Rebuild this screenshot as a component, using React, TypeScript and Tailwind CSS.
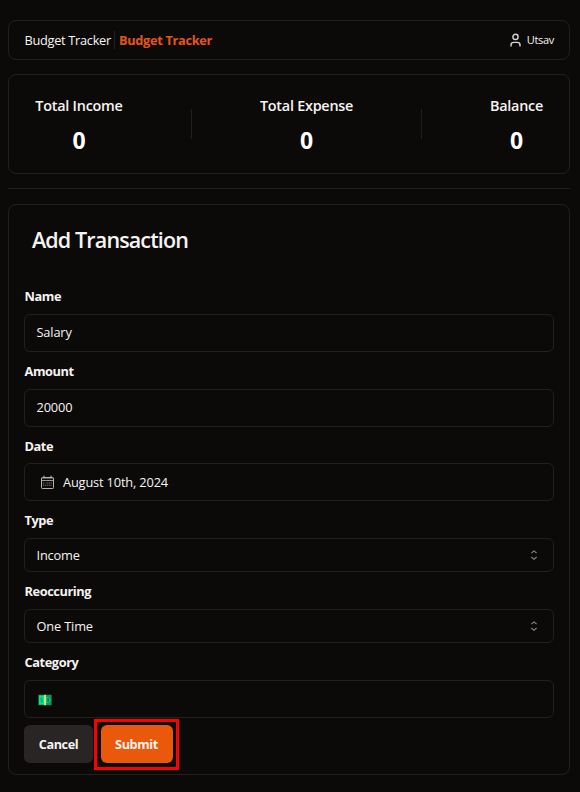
import type { ReactNode } from "react";

const border = "border border-[#21201e]";

function Label({ children, className = "" }: { children: ReactNode; className?: string }) {
  return <div className={`flex h-5 items-center pt-px pl-[0.5px] text-[12.8px] font-bold tracking-[-0.42px] ${className}`}>{children}</div>;
}

function Box({ children, className }: { children: ReactNode; className: string }) {
  return <div className={`${border} flex items-center rounded-md text-[12.8px] tracking-[-0.16px] ${className}`}>{children}</div>;
}

function Sort() {
  return (
    <svg className="mr-3 text-[#8b8a88]" width="14" height="14" viewBox="0 0 14 14" fill="none" stroke="currentColor">
      <path d="M4.4 5.2 7 2.9l2.6 2.3M4.4 9l2.6 2.3L9.6 9" strokeWidth="1.1" />
    </svg>
  );
}

function Person() {
  return (
    <svg width="14" height="15" viewBox="0 0 14 15" fill="none" stroke="#d8d6d3" strokeWidth="1.4" strokeLinecap="round">
      <circle cx="6.5" cy="3.9" r="2.6" />
      <path d="M2 13v-1c0-1.6 1.2-2.6 2.8-2.6h3.4c1.6 0 2.8 1 2.8 2.6v1" />
    </svg>
  );
}

function Calendar() {
  return (
    <svg className="mr-2" width="15" height="15" viewBox="0 0 15 15" fill="none" stroke="#b5b3b0">
      <rect x="1.5" y="2.5" width="12" height="11" rx=".8" />
      <path d="M1.5 3.5h12" opacity=".45" />
      <path d="M1.5 5.5h12" opacity=".85" />
      <path d="M4 .8v2M11 .8v2" strokeWidth="1.2" />
      <path d="M6.3 8h6M2.8 8h2.4M2.8 10.2h9" strokeDasharray="1.5 .6" opacity=".6" />
    </svg>
  );
}

function Cash() {
  return (
    <svg className="mt-px" width="14" height="12" viewBox="0 0 14 12">
      <rect x=".4" y=".8" width="13.2" height="10.4" fill="#069b5e" />
      <rect x="1" y="1.5" width="5" height="9" fill="#19d98b" />
      <path d="M4.4 4H2.9v2h1.5v2H2.7" stroke="#0fa568" fill="none" />
      <path d="M8.8 3.6h1.8l1.2 1.2v2.4l-1.2 1.2H8.8z" fill="#087044" stroke="#20d88a" />
      <rect x="6" y=".8" width="2" height="10.4" fill="#b9e986" />
    </svg>
  );
}

function Stat({ title, className }: { title: string; className: string }) {
  return (
    <div className="flex flex-col items-center pt-[2px]">
      <div className={`flex h-6 items-center justify-center text-[14.4px] font-semibold tracking-[-0.24px] whitespace-nowrap ${className}`}>{title}</div>
      <div className="mt-[7px] flex h-8 items-center text-[23px] font-bold text-white">0</div>
    </div>
  );
}

export default function App() {
  return (
    <div className="h-[792px] w-[580px] overflow-hidden bg-[#0c0a09] pt-5 pr-[10px] pl-2 font-['Open_Sans','Noto_Sans',sans-serif] text-[#f5f4f2]">
      <header className={`${border} flex h-10 items-center rounded-lg pr-[15px] pl-[15px] text-[12.8px]`}>
        <span className="w-[90px] pt-px pl-[0.5px] tracking-[-0.3px] whitespace-nowrap">Budget Tracker</span>
        <span className="h-[18px] w-px bg-[#21201e]" />
        <span className="ml-1 pt-px font-bold tracking-[-0.33px] text-[#e4561a]">Budget Tracker</span>
        <div className="ml-auto flex items-center gap-1 text-[11px] tracking-[-0.3px]">
          <Person />
          <span className="pt-px">Utsav</span>
        </div>
      </header>
      <section className={`${border} mt-[14px] flex h-[100px] items-center justify-between rounded-lg px-[26px]`}>
        <Stat title="Total Income" className="w-[88px]" />
        <span className="h-[30px] w-px bg-[#21201e]" />
        <Stat title="Total Expense" className="w-[93px]" />
        <span className="h-[30px] w-px bg-[#21201e]" />
        <Stat title="Balance" className="w-[53px]" />
      </section>
      <div className="mt-[14px] h-px bg-[#21201e]" />
      <main className={`${border} mt-[15px] h-[571px] rounded-lg px-[15px]`}>
        <h1 className="mt-[19px] ml-2 flex h-8 items-center text-[21.5px] font-semibold tracking-[-0.87px]">Add Transaction</h1>
        <div className="mt-[30px]">
          <Label>Name</Label>
          <Box className="mt-2 h-[38px] pl-[11.5px]">Salary</Box>
          <Label className="mt-[9px]">Amount</Label>
          <Box className="mt-2 h-[38px] pl-[11.5px]">20000</Box>
          <Label className="mt-[9px]">Date</Label>
          <Box className="mt-[7px] h-[38px] pl-[15px]"><Calendar /><span className="pt-px">August 10th, 2024</span></Box>
          <Label className="mt-[9px]">Type</Label>
          <Box className="mt-2 h-[34px] justify-between pl-[11.5px]"><span className="pt-px">Income</span><Sort /></Box>
          <Label className="mt-[9px]">Reoccuring</Label>
          <Box className="mt-2 h-[34px] justify-between pl-[11.5px]"><span className="pt-px">One Time</span><Sort /></Box>
          <Label className="mt-[9px]">Category</Label>
          <Box className="mt-[8px] h-[38px] pl-[13px]"><Cash /></Box>
        </div>
        <div className="mt-[7px] flex text-[12.7px] font-bold tracking-[-0.4px]">
          <button className="h-[38px] w-[69px] rounded-md bg-[#292524] pt-px">Cancel</button>
          <div className="-mt-[6px] ml-[1px] flex h-[51px] w-[85px] justify-center border-[3px] border-[#ff0000] pt-[3px]">
            <button className="h-[38px] w-[72px] rounded-md bg-[#ea580c] pt-px">Submit</button>
          </div>
        </div>
      </main>
    </div>
  );
}
